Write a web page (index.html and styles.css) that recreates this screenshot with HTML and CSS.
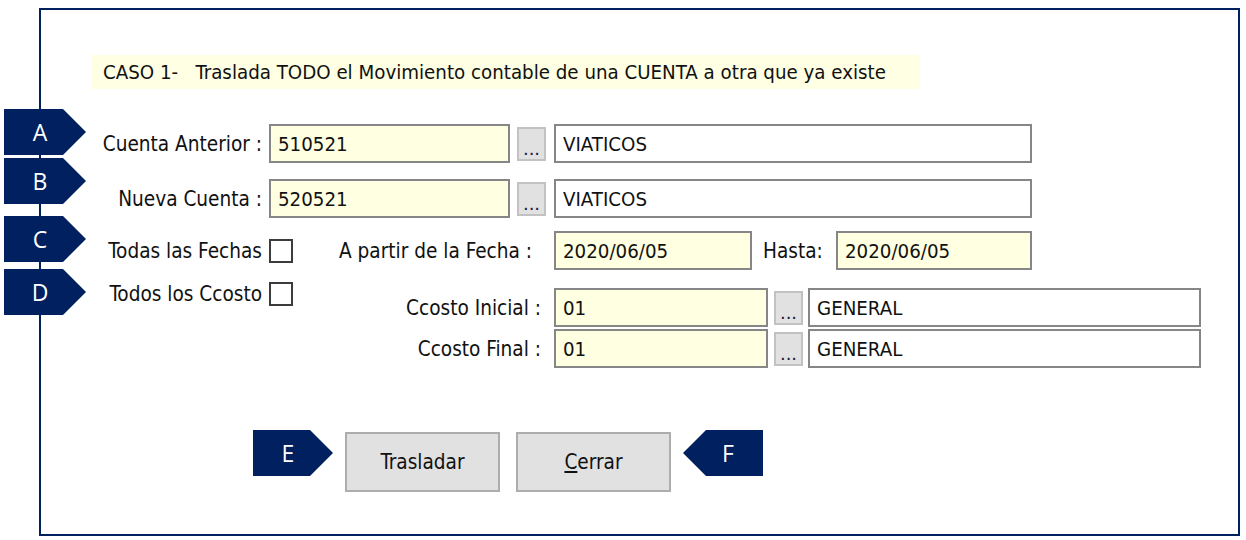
FILE: index.html
```html
<!DOCTYPE html>
<html lang="es">
<head>
    <meta charset="UTF-8">
    <meta name="viewport" content="width=device-width, initial-scale=1.0">
    <title>Traslado de Cuentas</title>
    <link rel="stylesheet" href="styles.css">
</head>
<body>
    <div class="frame">
        <!-- Callout tags along the left edge -->
        <div class="callouts">
            <div class="tag tag-a">A</div>
            <div class="tag tag-b">B</div>
            <div class="tag tag-c">C</div>
            <div class="tag tag-d">D</div>
        </div>

        <div class="caption">CASO 1-&nbsp;&nbsp; Traslada TODO el Movimiento contable de una CUENTA a otra que ya existe</div>

        <div class="form">
            <!-- Cuentas -->
            <div class="row row-first">
                <label class="lbl">Cuenta Anterior :</label>
                <input class="field code" type="text" value="510521" readonly>
                <button class="pick">...</button>
                <input class="field desc" type="text" value="VIATICOS" readonly>
            </div>
            <div class="row row-second">
                <label class="lbl">Nueva Cuenta :</label>
                <input class="field code" type="text" value="520521" readonly>
                <button class="pick">...</button>
                <input class="field desc" type="text" value="VIATICOS" readonly>
            </div>

            <!-- Fechas -->
            <div class="row row-dates">
                <label class="lbl">Todas las Fechas</label>
                <input class="check" type="checkbox">
                <label class="lbl lbl-from">A partir de la Fecha :</label>
                <input class="field date" type="text" value="2020/06/05" readonly>
                <label class="hasta">Hasta:</label>
                <input class="field date date-to" type="text" value="2020/06/05" readonly>
            </div>

            <!-- Centros de costo -->
            <div class="row-ccosto">
                <div class="check-group">
                    <label class="lbl">Todos los Ccosto</label>
                    <input class="check" type="checkbox">
                </div>
                <div class="ccosto-block">
                    <div class="row">
                        <label class="lbl lbl-cc">Ccosto Inicial :</label>
                        <input class="field cc-code" type="text" value="01" readonly>
                        <button class="pick pick-cc">...</button>
                        <input class="field cc-desc" type="text" value="GENERAL" readonly>
                    </div>
                    <div class="row">
                        <label class="lbl lbl-cc">Ccosto Final :</label>
                        <input class="field cc-code" type="text" value="01" readonly>
                        <button class="pick pick-cc">...</button>
                        <input class="field cc-desc" type="text" value="GENERAL" readonly>
                    </div>
                </div>
            </div>
        </div>

        <!-- Botones -->
        <div class="actions">
            <div class="tag tag-e">E</div>
            <button class="btn">Trasladar</button>
            <button class="btn"><u>C</u>errar</button>
            <div class="tag tag-f">F</div>
        </div>
    </div>
</body>
</html>
```

FILE: styles.css
```css
/* General Styles */
body {
    margin: 0;
    background: #fff;
    font-family: 'DejaVu Sans', sans-serif;
    font-stretch: condensed;
    font-size: 20.6px;
    color: #111;
}

/* Outer frame */
.frame {
    position: relative;
    margin: 8px 0 0 39px;
    width: 1197px;
    height: 524px;
    border: 2px solid #002060;
}

/* Callout tags */
.callouts {
    position: absolute;
    left: -37px;
    top: 99px;
    display: flex;
    flex-direction: column;
}

.tag {
    width: 82px;
    height: 46px;
    background: #002060;
    color: #fff;
    font-family: 'Open Sans', sans-serif;
    font-stretch: normal;
    font-size: 23px;
    line-height: 46px;
    box-sizing: border-box;
    padding-right: 10px;
    text-align: center;
    clip-path: polygon(0 0, 59px 0, 100% 50%, 59px 100%, 0 100%);
}

.tag-b { margin-top: 3px; }
.tag-c { margin-top: 12px; }
.tag-d { margin-top: 7px; }

/* Caption band */
.caption {
    margin: 45px 0 0 51px;
    width: 817px;
    height: 34px;
    padding-left: 11px;
    line-height: 34px;
    background: #ffffe3;
    font-size: 20.3px;
    white-space: nowrap;
}

/* Form rows */
.form {
    margin-top: 35px;
    padding-left: 50px;
}

.row {
    display: flex;
    align-items: center;
    height: 39px;
}

.row-second { margin-top: 16px; }
.row-dates { margin-top: 13px; }

.lbl {
    width: 171px;
    margin-right: 7px;
    text-align: right;
    white-space: nowrap;
}

.field {
    box-sizing: border-box;
    height: 39px;
    margin: 0;
    padding: 0 0 0 7px;
    border: 2px solid #868686;
    background: #ffffe1;
    font-family: inherit;
    font-stretch: condensed;
    font-size: 20.3px;
    color: #111;
    outline: none;
}

.code { width: 241px; }

.desc {
    width: 478px;
    background: #fff;
}

.pick {
    box-sizing: border-box;
    width: 29px;
    height: 34px;
    margin: 0 8px 0 7px;
    padding: 0;
    border: 2px solid #c2c2c2;
    background: #e1e1e1;
    font-family: inherit;
    font-size: 18px;
    line-height: 40px;
    color: #1a1a40;
}

/* Checkboxes */
.check {
    appearance: none;
    box-sizing: border-box;
    width: 24px;
    height: 24px;
    margin: 0;
    border: 2px solid #3c3c3c;
    background: #fff;
}

/* Date row */
.lbl-from {
    width: 239px;
    margin-right: 22px;
}

.date { width: 198px; }

.date-to { width: 196px; }

.hasta {
    width: 63px;
    margin: 0 10px 0 11px;
    white-space: nowrap;
}

/* Cost centre rows */
.row-ccosto {
    display: flex;
    align-items: flex-start;
    margin-top: 12px;
}

.check-group {
    display: flex;
    align-items: center;
    height: 24px;
}

.ccosto-block {
    display: flex;
    flex-direction: column;
    gap: 2px;
    margin-top: 6px;
}

.lbl-cc {
    width: 248px;
    margin-right: 13px;
}

.cc-code { width: 214px; }

.pick-cc { margin: 0 5px 0 6px; }

.cc-desc {
    width: 393px;
    background: #fff;
}

/* Action buttons */
.actions {
    display: flex;
    align-items: flex-start;
    margin-top: 62px;
    padding-left: 212px;
}

.tag-e {
    width: 80px;
    margin-right: 12px;
    clip-path: polygon(0 0, 57px 0, 100% 50%, 57px 100%, 0 100%);
}

.tag-f {
    width: 80px;
    margin-left: 12px;
    padding-right: 0;
    padding-left: 10px;
    clip-path: polygon(23px 0, 100% 0, 100% 100%, 23px 100%, 0 50%);
}

.btn {
    box-sizing: border-box;
    width: 155px;
    height: 60px;
    margin-top: 2px;
    border: 2px solid #adadad;
    background: #e1e1e1;
    font-family: inherit;
    font-stretch: condensed;
    font-size: 20.6px;
    color: #111;
}

.btn + .btn { margin-left: 16px; }
```
